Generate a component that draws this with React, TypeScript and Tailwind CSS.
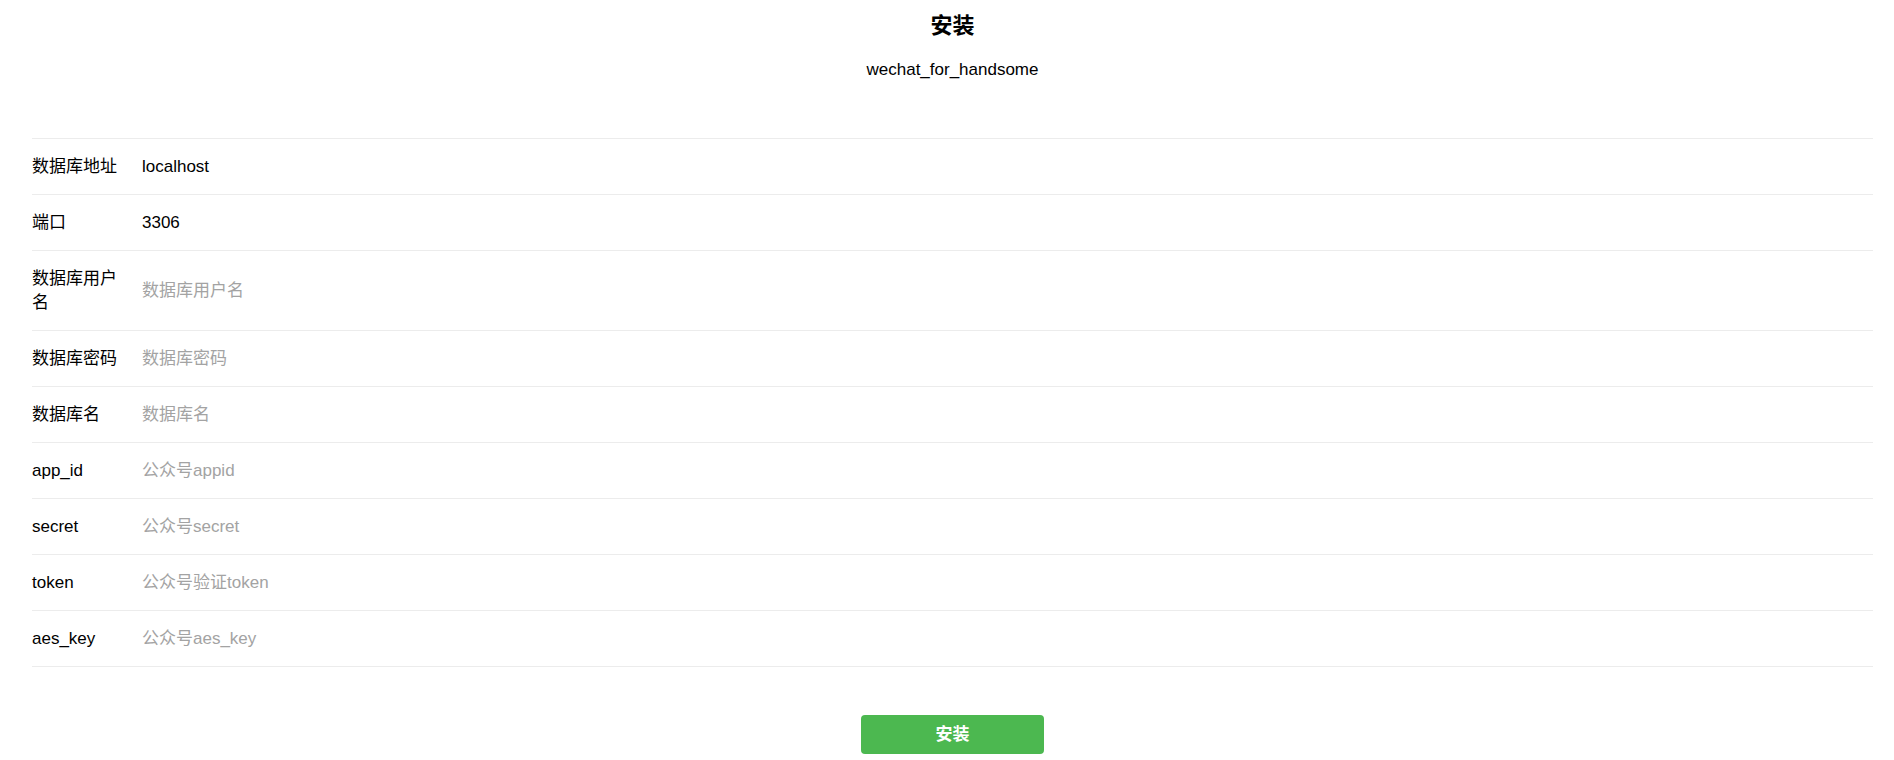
import React from "react";

const rows: { label: string; value?: string; placeholder?: string }[] = [
  { label: "数据库地址", value: "localhost" },
  { label: "端口", value: "3306" },
  { label: "数据库用户名", placeholder: "数据库用户名" },
  { label: "数据库密码", placeholder: "数据库密码" },
  { label: "数据库名", placeholder: "数据库名" },
  { label: "app_id", placeholder: "公众号appid" },
  { label: "secret", placeholder: "公众号secret" },
  { label: "token", placeholder: "公众号验证token" },
  { label: "aes_key", placeholder: "公众号aes_key" },
];

export default function App() {
  return (
    <div
      className="min-h-[760px] bg-white text-black"
      style={{ fontFamily: '"Liberation Sans", Arial, "Noto Sans CJK SC", sans-serif' }}
    >
      <div className="ml-[32px] mr-[21px]">
        <div className="pt-[11px] text-center">
          <h1 className="text-[22px] leading-[30px] font-bold">安装</h1>
          <p className="mt-[17px] text-[17px] leading-[24px]">wechat_for_handsome</p>
        </div>
        <div className="mt-[56px] border-b border-[#ececec]">
          {rows.map((r) => (
            <div key={r.label} className="flex items-center border-t border-[#ececec] py-[15.5px] text-[17px] leading-[24px]">
              <div className="w-[110px] shrink-0 pr-[14px] break-all">{r.label}</div>
              <div className="flex-1">
                {r.value ? (
                  <span className="text-black">{r.value}</span>
                ) : (
                  <span className="text-[#a3a3a3]">{r.placeholder}</span>
                )}
              </div>
            </div>
          ))}
        </div>
        <div className="mt-[48px] flex justify-center">
          <button className="h-[39px] w-[183px] rounded-[4px] bg-[#4cb850] text-[17px] font-bold text-white">
            安装
          </button>
        </div>
      </div>
    </div>
  );
}
